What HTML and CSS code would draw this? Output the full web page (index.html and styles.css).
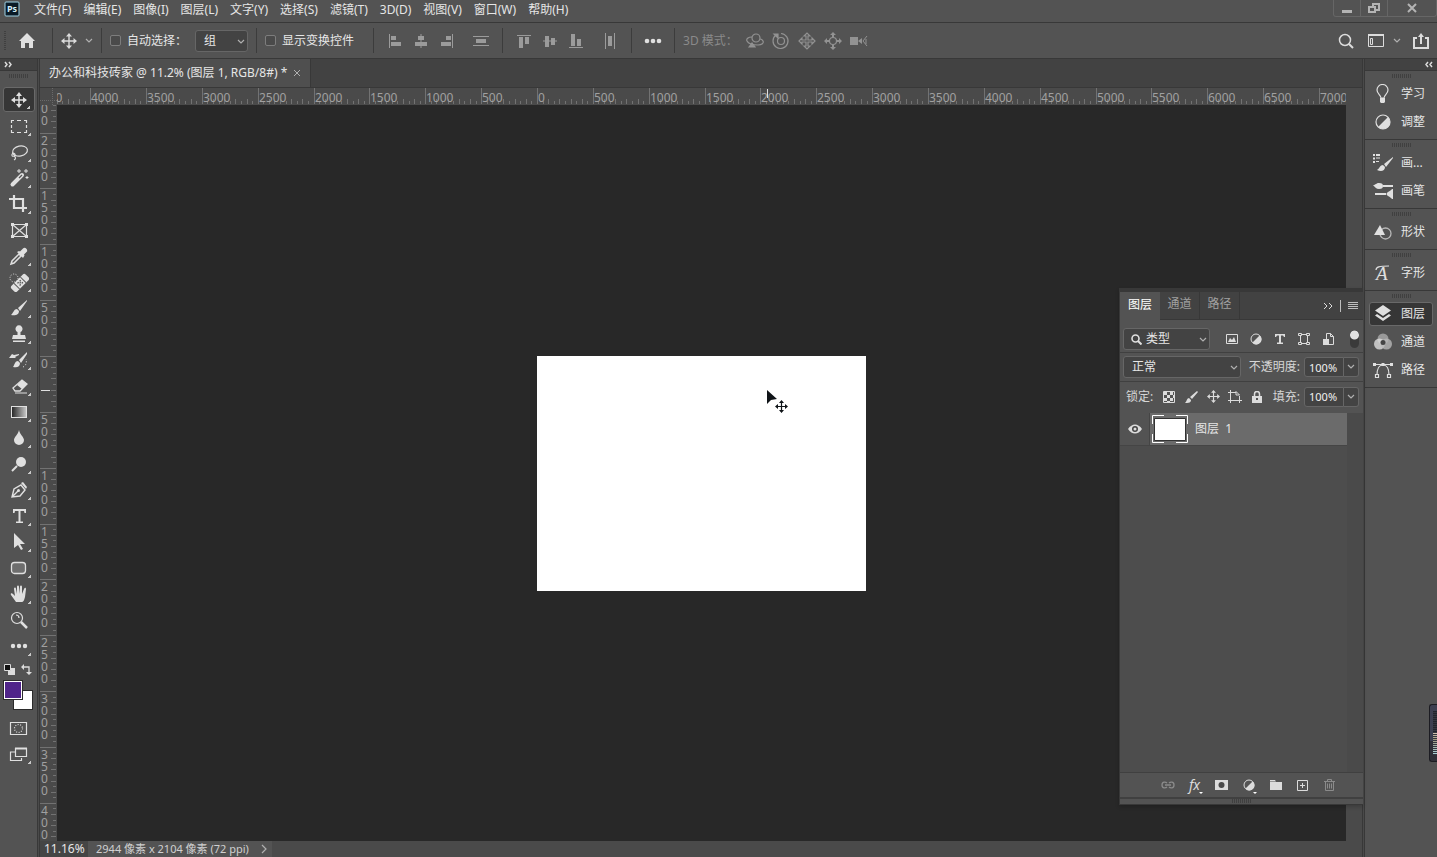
FILE: index.html
```
<!DOCTYPE html>
<html lang="zh-CN">
<head>
    <meta charset="utf-8">
    <title>办公和科技砖家</title>
    <link rel="stylesheet" href="styles.css">
</head>
<body>
    <header class="menubar">
        <svg class="logo" width="16" height="16" viewBox="0 0 16 16">
            <rect x="1" y="1" width="14" height="14" rx="1" fill="#0a1a26" stroke="#9fd3e6"/>
            <text x="3" y="11" class="logo-text">Ps</text>
        </svg>
        <nav class="menus">
            <button>文件(F)</button>
            <button>编辑(E)</button>
            <button>图像(I)</button>
            <button>图层(L)</button>
            <button>文字(Y)</button>
            <button>选择(S)</button>
            <button>滤镜(T)</button>
            <button>3D(D)</button>
            <button>视图(V)</button>
            <button>窗口(W)</button>
            <button>帮助(H)</button>
        </nav>
        <div class="window-controls">
            <button aria-label="最小化"><svg width="12" height="12"><path d="M1 8h10v3H1z" fill="#b4b4b4"/></svg></button>
            <button aria-label="还原"><svg width="12" height="12" fill="none" stroke="#b4b4b4" stroke-width="2"><path d="M5 4V2h6v6H8M1 5h6v5H1z"/></svg></button>
            <button class="close" aria-label="关闭"><svg width="12" height="12" stroke="#b4b4b4" stroke-width="2"><path d="M2 2l8 8M10 2l-8 8"/></svg></button>
        </div>
    </header>

    <div class="options">
        <span class="grip-v"></span>
        <button class="home" aria-label="主页"><svg width="18" height="16" fill="#e0e0e0"><path d="M9 0L17 8H15V15H11V10H7V15H3V8H1z"/></svg></button>
        <span class="sep"></span>
        <button class="opt-move" aria-label="移动工具">
            <svg width="16" height="16" viewBox="0 0 16 16"><path d="M8 2v12M2 8h12" stroke="#dcdcdc" stroke-width="1.4"/><path d="M8 0l3 3.5H5zM8 16l3-3.5H5zM0 8l3.5-3v6zM16 8l-3.5-3v6z" fill="#dcdcdc"/></svg>
        </button>
        <button class="opt-chevron" aria-label="预设"><svg width="8" height="6" class="chev"><path d="M1 1l3 3 3-3"/></svg></button>
        <span class="sep"></span>
        <label class="check"><input type="checkbox">自动选择：</label>
        <span class="select group-select">
            <select aria-label="组"><option>组</option></select>
            <svg width="8" height="6" class="chev"><path d="M1 1l3 3 3-3"/></svg>
        </span>
        <span class="sep"></span>
        <label class="check transform"><input type="checkbox">显示变换控件</label>
        <span class="sep"></span>
        <button class="opt" aria-label="左对齐"><svg width="16" height="16" fill="#9b9b9b"><path d="M2 1h1v14H2zM4 3h5v4H4zM4 9h10v4H4z"/></svg></button>
        <button class="opt" aria-label="水平居中对齐"><svg width="16" height="16" fill="#9b9b9b"><path d="M7.5 1h1v14h-1zM5 3h6v4H5zM2 9h12v4H2z"/></svg></button>
        <button class="opt" aria-label="右对齐"><svg width="16" height="16" fill="#9b9b9b"><path d="M13 1h1v14h-1zM7 3h5v4H7zM2 9h10v4H2z"/></svg></button>
        <button class="opt spaced" aria-label="垂直分布"><svg width="16" height="16" fill="#9b9b9b"><path d="M0 3h16v1H0zM3 6h10v4H3zM0 12h16v1H0z"/></svg></button>
        <span class="sep"></span>
        <button class="opt" aria-label="顶对齐"><svg width="16" height="16" fill="#9b9b9b"><path d="M1 2h14v1H1zM3 4h4v11H3zM9 4h4v7H9z"/></svg></button>
        <button class="opt" aria-label="垂直居中对齐"><svg width="16" height="16" fill="#9b9b9b"><path d="M1 7.5h14v1H1zM3 3h4v11H3zM9 5h4v7H9z"/></svg></button>
        <button class="opt" aria-label="底对齐"><svg width="16" height="16" fill="#9b9b9b"><path d="M1 14h14v1H1zM3 1h4v12H3zM9 6h4v7H9z"/></svg></button>
        <button class="opt spaced" aria-label="水平分布"><svg width="16" height="16" fill="#9b9b9b"><path d="M3 0h1v16H3zM6 3h4v10H6zM12 0h1v16h-1z"/></svg></button>
        <span class="sep"></span>
        <button class="opt" aria-label="更多"><svg width="18" height="6" fill="#e0e0e0"><circle cx="3" cy="3" r="2.3"/><circle cx="9" cy="3" r="2.3"/><circle cx="15" cy="3" r="2.3"/></svg></button>
        <span class="sep"></span>
        <span class="mode-label">3D 模式：</span>
        <button class="opt" aria-label="环绕"><svg width="20" height="16" viewBox="0 0 20 16" fill="none" stroke="#929292" stroke-width="1.2"><circle cx="11" cy="5" r="4"/><path d="M7 4C3 4 1 6 2 8s5 4 11 4c4 0 6-2 5-4s-2-2-3-2"/><path d="M4 14l3-4 3 4z" fill="#929292"/></svg></button>
        <button class="opt" aria-label="滚动"><svg width="18" height="18" fill="none" stroke="#929292" stroke-width="1.2"><circle cx="9" cy="9" r="3.5"/><path d="M4 3a7.500 7.500 0 1 0 5-1.500"/><path d="M2 2h4v4z" fill="#929292"/></svg></button>
        <button class="opt" aria-label="拖动"><svg width="18" height="18" viewBox="0 0 18 18" fill="none" stroke="#929292" stroke-width="1.2"><path d="M8 8V4H6l3-3 3 3h-2v4h4V6l3 3-3 3v-2h-4v4h2l-3 3-3-3h2v-4H4v2L1 9l3-3v2z"/></svg></button>
        <button class="opt" aria-label="滑动"><svg width="18" height="18" viewBox="0 0 18 18" fill="#929292"><circle cx="9" cy="9" r="3.5" fill="none" stroke="#929292" stroke-width="1.2"/><path d="M9 0l3 3h-2v2H8V3H6zM9 18l3-3h-2v-2H8v2H6zM0 9l3-3v2h2v2H3v2zM18 9l-3-3v2h-2v2h2v2z"/></svg></button>
        <button class="opt" aria-label="缩放"><svg width="20" height="12" fill="#929292"><path d="M1 2h8v8H1zM9 6l4-3v6z"/><path d="M18 1l-4 5 4 5M17 4v5" fill="none" stroke="#929292"/></svg></button>
        <div class="options-right">
            <button aria-label="搜索"><svg width="16" height="16" fill="none" stroke="#dcdcdc" stroke-width="1.5"><circle cx="7" cy="7" r="5.5"/><path d="M11 11l4 4" stroke-width="2"/></svg></button>
            <button class="workspace-btn" aria-label="工作区"><svg width="16" height="14" fill="none" stroke="#dcdcdc"><path d="M.5 1.5h15v11H.5z"/><path d="M0 1h16" stroke-width="2"/><path d="M2.5 4.5h2v6h-2z"/></svg></button>
            <button class="workspace-chev" aria-label="选择工作区"><svg width="8" height="6" class="chev"><path d="M1 1l3 3 3-3"/></svg></button>
            <button aria-label="共享"><svg width="16" height="16" fill="none" stroke="#dcdcdc" stroke-width="2"><path d="M4 5H1v10h14V5h-3M8 11V3"/><path d="M8 0l3 4H5z" fill="#dcdcdc" stroke="none"/></svg></button>
        </div>
    </div>

    <main class="workspace">
        <aside class="toolbar">
            <button class="expand" aria-label="展开"><svg width="8" height="7" class="dbl"><path d="M1 1l2 2.5L1 6M5 1l2 2.5L5 6"/></svg></button>
            <span class="grip"></span>
            <div class="tools">
                <button class="tool active" aria-label="移动"><svg viewBox="0 0 20 20"><path d="M10 4v12M4 10h12" stroke="#e0e0e0" stroke-width="1.5"/><path d="M10 2l3 4H7zM10 18l3-4H7zM2 10l4-3v6zM18 10l-4-3v6z"/></svg></button>
                <button class="tool" aria-label="矩形选框"><svg viewBox="0 0 20 20" class="line"><path d="M2.5 7V4.5H5M8 4.5h4M15 4.5h2.500V7M17.5 9v3M17.5 14v2.500H15M12 16.5H8M5 16.5H2.5V14M2.5 12V9"/></svg></button>
                <button class="tool" aria-label="套索"><svg viewBox="0 0 20 20" class="line"><ellipse cx="11" cy="9" rx="7.5" ry="5" transform="rotate(-12 11 9)"/><path d="M4 11c-2 2-1 4 1 3s1-3-1-3M5 14c2 1 2 3 0 4"/></svg></button>
                <button class="tool" aria-label="魔棒"><svg viewBox="0 0 20 20"><path d="M3.5 16.5L13 7" stroke="#e0e0e0" stroke-width="4" stroke-linecap="round"/><path d="M10 10l3-3" stroke="#535353" stroke-width="1.3"/><path d="M10 1v4M8 3h4M17 1v4M15 3h4M18 8v3M16.500 9.500h3" stroke="#e0e0e0"/></svg></button>
                <button class="tool" aria-label="裁剪"><svg viewBox="0 0 20 20" class="line thick"><path d="M0 5h14v13M5 1v13h13"/></svg></button>
                <button class="tool plain" aria-label="图框"><svg viewBox="0 0 20 20" class="line"><path d="M3.5 4.5h14v12h-14zM3.5 4.5l14 12M17.5 4.5l-14 12"/><path d="M2 3h3v3H2zM16 3h3v3h-3zM2 15h3v3H2zM16 15h3v3h-3z" class="fill"/></svg></button>
                <button class="tool" aria-label="吸管"><svg viewBox="0 0 20 20"><path d="M10 8l2 2-7 7-3 1 1-3z" fill="none" stroke="#e0e0e0" stroke-width="1.5"/><path d="M8 6l2-1 1 .5 3-3c2-2 5 1 4 3l-3 3 .5 1L14 12z"/></svg></button>
                <button class="tool" aria-label="污点修复画笔"><svg viewBox="0 0 20 20"><g transform="rotate(-45 11 11)"><rect x="1" y="7" width="20" height="8" rx="2"/><rect x="6" y="7" width="1" height="8" fill="#535353"/><rect x="15" y="7" width="1" height="8" fill="#535353"/><path d="M9 9.500h1.500M12 9.500h1.500M9 12.500h1.500M12 12.500h1.500M10.500 11h1.500" stroke="#535353" stroke-width="1.3"/></g><circle cx="5" cy="6" r="4" fill="none" stroke="#e0e0e0" stroke-dasharray="1 1.500"/></svg></button>
                <button class="tool" aria-label="画笔"><svg viewBox="0 0 20 20"><path d="M18 2L9 10l2 3 7-10zM8 11c-3 0-3 3-6 6 4 1 8 0 8-4z"/></svg></button>
                <button class="tool" aria-label="仿制图章"><svg viewBox="0 0 20 20"><path d="M8.500 8a3.500 3.500 0 1 1 3 0v3h4.500l1 4H3l1-4h4.500zM4 16.500h12V18H4z"/></svg></button>
                <button class="tool" aria-label="历史记录画笔"><svg viewBox="0 0 20 20"><path d="M18 2l-8 8 2 3 6-9zM9 11c-3 0-3 3-5 6 4 1 7 0 7-4zM0 8l3-4 2 1 5-1v1L6 7l1 1z"/><path d="M14 17c3-1 4-5 3-8" fill="none" stroke="#e0e0e0" stroke-dasharray="1 2"/></svg></button>
                <button class="tool" aria-label="橡皮擦"><svg viewBox="0 0 20 20"><path d="M4 12l9-8 5 4-7 7H6z" fill="none" stroke="#e0e0e0" stroke-width="1.3"/><path d="M8 9l5-5 5 4-5 5zM6 16.500h12v1H6z"/></svg></button>
                <button class="tool" aria-label="渐变"><svg viewBox="0 0 20 20"><defs><linearGradient id="ramp"><stop offset="0" stop-color="#222"/><stop offset="1" stop-color="#ccc"/></linearGradient></defs><rect x="2.500" y="4.500" width="15" height="11" fill="url(#ramp)" stroke="#e0e0e0"/></svg></button>
                <button class="tool" aria-label="模糊"><svg viewBox="0 0 20 20"><path d="M10 2c1 5 5 7 5 10a5 5 0 0 1-10 0c0-3 4-5 5-10z"/></svg></button>
                <button class="tool" aria-label="减淡"><svg viewBox="0 0 20 20"><circle cx="12" cy="8" r="5"/><path d="M8 12l-5 5" stroke="#e0e0e0" stroke-width="2"/></svg></button>
                <button class="tool" aria-label="钢笔"><svg viewBox="0 0 20 20"><path d="M3 17L5 9l7-4 4 5-5 6zM3 17l6-6" fill="none" stroke="#e0e0e0" stroke-width="1.4"/><circle cx="9.500" cy="10.500" r="1.500"/><path d="M12 3l2-1 4 5-1 2z"/></svg></button>
                <button class="tool" aria-label="文字"><svg viewBox="0 0 20 20"><path d="M4 3h13v4h-1.500L15 5h-3.500v10.500H14V17H7v-1.500h2.500V5H6l-.5 2H4z"/></svg></button>
                <button class="tool" aria-label="路径选择"><svg viewBox="0 0 20 20"><path d="M5 1l11 11h-5l3 5-2 1-3-5-4 3z"/></svg></button>
                <button class="tool" aria-label="圆角矩形"><svg viewBox="0 0 20 20"><rect x="2.500" y="4.500" width="14" height="11" rx="3" fill="#6e6e6e" stroke="#e0e0e0" stroke-width="1.300"/></svg></button>
                <button class="tool" aria-label="抓手"><svg viewBox="0 0 20 20"><path d="M7 18L2 11c-1-2 1-2 2-1l2 2L5 5c0-2 2-2 2 0l1 5V3c0-2 2-2 2 0v7l1-7c0-2 2-2 2 0v7l2-5c1-2 2-1 2 0l-1 8c-1 4-2 5-3 5z"/></svg></button>
                <button class="tool plain" aria-label="缩放"><svg viewBox="0 0 20 20" class="line"><circle cx="8" cy="8" r="5.500"/><path d="M7 5c2 0 3 1 3 3"/><path d="M12 12l6 6" stroke-width="2.500"/></svg></button>
                <button class="tool" aria-label="编辑工具栏"><svg viewBox="0 0 20 20"><circle cx="4" cy="10" r="2.200"/><circle cx="10" cy="10" r="2.200"/><circle cx="16" cy="10" r="2.200"/></svg></button>
            </div>
            <div class="color-mini">
                <button aria-label="默认颜色"><svg width="11" height="11"><path d="M4 4h7v7H4z" fill="#dcdcdc"/><path d="M.5 .5h6v6h-6z" fill="#111" stroke="#dcdcdc"/></svg></button>
                <button aria-label="切换颜色"><svg width="11" height="11"><path d="M3 3h5v6" fill="none" stroke="#dcdcdc" stroke-width="1.300"/><path d="M0 3l3-3v6zM8 11L5 8h6z" fill="#dcdcdc"/></svg></button>
            </div>
            <div class="swatches">
                <button class="swatch back" aria-label="背景色"></button>
                <button class="swatch front" aria-label="前景色"></button>
            </div>
            <button class="tool plain" aria-label="快速蒙版"><svg viewBox="0 0 20 20" class="line"><path d="M1.500 4.500h16v12h-16z"/><circle cx="9.500" cy="10.500" r="4" stroke-dasharray="1 1.500"/></svg></button>
            <button class="tool" aria-label="屏幕模式"><svg viewBox="0 0 20 20" class="line"><path d="M6 8H1.500v8.500h11V14M6.500 4.500h11v8h-11z"/><path d="M6 4.500h12" stroke-width="2"/></svg></button>
        </aside>

        <section class="document">
            <div class="doc-tabs">
                <div class="doc-tab">
                    <span>办公和科技砖家 @ 11.2% (图层 1, RGB/8#) *</span>
                    <button aria-label="关闭"><svg width="8" height="8" stroke="#b0b0b0"><path d="M1 1l6 6M7 1L1 7"/></svg></button>
                </div>
            </div>
            <div class="view">
                <div class="ruler-corner"></div>
                <svg class="ruler ruler-x" id="rulerX"></svg>
                <div class="scroll-y"></div>
                <svg class="ruler ruler-y" id="rulerY"></svg>
                <div class="canvas" id="canvas">
                    <div class="artboard" id="artboard"></div>
                    <svg class="cursor" width="22" height="26" viewBox="0 0 22 26"><path d="M1 1v14l4-4 6-1z" fill="#101418"/><path d="M15.500 12v11M10 17.500h11" stroke="#101418" stroke-width="1.200"/><path d="M15.500 11l2.500 3h-5zM15.500 24l2.500-3h-5zM9 17.500l3-2.500v5zM22 17.500l-3-2.500v5z" fill="#101418"/></svg>
                </div>
            </div>
            <footer class="status">
                <input class="zoom" value="11.16%" aria-label="缩放比例">
                <button class="doc-info">2944 像素 x 2104 像素 (72 ppi)<svg width="6" height="10" class="chev"><path d="M1 1l4 4-4 4"/></svg></button>
            </footer>
        </section>

        <aside class="dock">
            <button class="expand right" aria-label="展开面板"><svg width="8" height="7" class="dbl"><path d="M3 1L1 3.500 3 6M7 1L5 3.500 7 6"/></svg></button>
            <div class="dock-group">
                <span class="grip"></span>
                <button><svg viewBox="0 0 20 20" class="line"><path d="M8 14c0-3-4-4-4-8a5.500 5.500 0 0 1 11 0c0 4-4 5-4 8z"/><path d="M7 14h5v4l-1 1H8l-1-1z" class="fill"/></svg>学习</button>
                <button><svg viewBox="0 0 20 20"><circle cx="10" cy="10" r="7" fill="none" stroke="#e0e0e0" stroke-width="1.200"/><path d="M15 5A7 7 0 1 1 5 15z"/></svg>调整</button>
            </div>
            <div class="dock-group">
                <span class="grip"></span>
                <button><svg viewBox="0 0 20 20"><path d="M0 1h2v2H0zM0 4.500h2v2H0zM0 8h2v2H0zM3 1h4v2H3zM3 4.500h4v1H3zM3 8h3v1H3zM20 4l-9 7 2 3 7-9zM10 12c-3 0-3 3-6 5 4 2 8 1 8-3z"/></svg>画...</button>
                <button><svg viewBox="0 0 20 20"><path d="M0 4c3 0 3-2 6-2s4 1 4 3-1 3-4 3-4-2-6-4zM10 4h10v2H10zM2 12h11v2H2zM20 8v10c-2 0-2-2-5-3-2-1-2-3 0-4 3-1 3-3 5-3z"/></svg>画笔</button>
            </div>
            <div class="dock-group">
                <span class="grip"></span>
                <button><svg viewBox="0 0 20 20"><circle cx="12.500" cy="11.500" r="5.500" fill="none" stroke="#b8b8b8" stroke-width="1.300"/><path d="M7 3l5 10H1z"/></svg>形状</button>
            </div>
            <div class="dock-group">
                <span class="grip"></span>
                <button><svg viewBox="0 0 20 20"><text x="3" y="17" class="glyph-a">A</text><path d="M3 7c0-3 3-4 13-4" fill="none" stroke="#e0e0e0" stroke-width="1.200"/></svg>字形</button>
            </div>
            <div class="dock-group">
                <span class="grip"></span>
                <button class="active"><svg viewBox="0 0 20 20"><path d="M10 1l8 5.500-8 5.500-8-5.500zM4 10l6 4 6-4 2 1.500-8 5.500-8-5.500z"/></svg>图层</button>
                <button><svg viewBox="0 0 20 20"><circle cx="10" cy="7" r="5.500" fill="#999"/><circle cx="6.500" cy="12" r="5.500" fill="#ddd" fill-opacity=".8"/><circle cx="13.500" cy="12" r="5.500" fill="#b8b8b8" fill-opacity=".8"/><circle cx="10" cy="10.500" r="2.500" fill="#444"/></svg>通道</button>
                <button><svg viewBox="0 0 20 20" class="line"><path d="M2 4.500h16M4 15c0-6 2-10 6-10s6 4 6 10"/><path d="M0 3h3v3H0zM17 3h3v3h-3zM8.500 3h3v3h-3z" class="fill"/><path d="M2.500 14.500h3v3h-3zM14.500 14.500h3v3h-3z"/></svg>路径</button>
            </div>
        </aside>

        <section class="layers">
            <div class="panel-tabs">
                <button class="active">图层</button>
                <button>通道</button>
                <button>路径</button>
                <span class="panel-menu">
                    <svg width="10" height="8" class="dbl thin"><path d="M1 1l3 3-3 3M6 1l3 3-3 3"/></svg>
                    <i></i>
                    <svg width="10" height="9" stroke="#bdbdbd"><path d="M0 1.500h10M0 3.500h10M0 5.500h10M0 7.500h10"/></svg>
                </span>
            </div>
            <div class="row filter">
                <span class="select type-select">
                    <svg class="lens" width="11" height="11" fill="none" stroke="#e0e0e0" stroke-width="1.600"><circle cx="4.500" cy="4.500" r="3.500"/><path d="M7 7l3.500 3.500" stroke-width="2"/></svg>
                    <select aria-label="过滤类型"><option>类型</option></select>
                    <svg width="8" height="6" class="chev"><path d="M1 1l3 3 3-3"/></svg>
                </span>
                <div class="filter-icons">
                    <button aria-label="像素图层"><svg width="12" height="11"><path d="M.5 .5h11v9H.5z" fill="none" stroke="#dcdcdc"/><path d="M2 8l2-4 2 2 2-3 2 5z" fill="#dcdcdc"/></svg></button>
                    <button aria-label="调整图层"><svg width="12" height="12"><circle cx="6" cy="6" r="5" fill="none" stroke="#dcdcdc"/><path d="M9.500 2.500a5 5 0 1 1-7 7z" fill="#dcdcdc"/></svg></button>
                    <button aria-label="文字图层"><svg width="10" height="10" fill="#dcdcdc"><path d="M0 0h10v3H9L8 1.500H6V8.500h2V10H2V8.500h2V1.500H2L1 3H0z"/></svg></button>
                    <button aria-label="形状图层"><svg width="12" height="12" fill="none" stroke="#dcdcdc"><path d="M2.500 1.500h7v9h-7z"/><path d="M.5 .5h3v2h-3zM8.500 .5h3v2h-3zM.5 9.500h3v2h-3zM8.500 9.500h3v2h-3z" fill="#535353"/></svg></button>
                    <button aria-label="智能对象"><svg width="11" height="12" fill="none" stroke="#dcdcdc"><path d="M3.500 6V.5h4l3 3v8H6M7.500 .5v3h3"/><path d="M0 6h6v6H0z" fill="#dcdcdc" stroke="none"/></svg></button>
                </div>
                <button class="toggle" aria-label="打开过滤"></button>
            </div>
            <div class="row blend">
                <span class="select blend-select">
                    <select aria-label="混合模式"><option>正常</option></select>
                    <svg width="8" height="6" class="chev"><path d="M1 1l3 3 3-3"/></svg>
                </span>
                <label class="amount">不透明度: <input value="100%"></label>
                <button class="amount-chev" aria-label="不透明度滑块"><svg width="8" height="6" class="chev"><path d="M1 1l3 3 3-3"/></svg></button>
            </div>
            <div class="row lock">
                <span>锁定:</span>
                <div class="lock-icons">
                    <button aria-label="锁定透明像素"><svg width="12" height="12"><path d="M.5 .5h11v11H.5z" fill="none" stroke="#dcdcdc"/><path d="M1 1h3v3H1zM7 1h3v3H7zM4 4h3v3H4zM10 4h1v3h-1zM1 7h3v3H1zM7 7h3v3H7zM4 10h3v1H4z" fill="#dcdcdc"/></svg></button>
                    <button aria-label="锁定图像像素"><svg width="14" height="14" fill="#dcdcdc"><path d="M13 1L6 7l2 2 6-7zM5 8c-2 0-2 3-4 5 3 0 6 0 6-3z"/></svg></button>
                    <button aria-label="锁定位置"><svg width="13" height="13" viewBox="0 0 16 16"><path d="M8 2v12M2 8h12" stroke="#dcdcdc" stroke-width="1.400"/><path d="M8 0l3 3.500H5zM8 16l3-3.500H5zM0 8l3.500-3v6zM16 8l-3.500-3v6z" fill="#dcdcdc"/></svg></button>
                    <button aria-label="锁定画板"><svg width="14" height="13" fill="none" stroke="#dcdcdc"><path d="M2.500 0v13M0 2.500h8M0 10.500h14M11.500 6v7M8 1.500l3.500 3.500H8z"/></svg></button>
                    <button aria-label="全部锁定"><svg width="10" height="12" fill="#dcdcdc"><path d="M2.500 5V3a2.500 2.500 0 0 1 5 0v2" fill="none" stroke="#dcdcdc" stroke-width="1.500"/><path d="M0 5h10v7H0z"/><path d="M4 7h2v2H4z" fill="#535353"/></svg></button>
                </div>
                <label class="amount">填充: <input value="100%"></label>
                <button class="amount-chev" aria-label="填充滑块"><svg width="8" height="6" class="chev"><path d="M1 1l3 3 3-3"/></svg></button>
            </div>
            <div class="layer-list">
                <div class="layer">
                    <button class="eye" aria-label="可见性"><svg width="14" height="10"><path d="M0 5c4-6 10-6 14 0-4 6-10 6-14 0z" fill="#dcdcdc"/><circle cx="7" cy="5" r="3" fill="#444"/><circle cx="7" cy="5" r="1.500" fill="#dcdcdc"/></svg></button>
                    <div class="layer-body">
                        <svg class="thumb" width="36" height="28"><path d="M2.500 3.500h31v22h-31z" fill="#fff" stroke="#333"/><path d="M.5 9V.5H12M24 .5h11.500V9M35.500 19v8.500H24M12 27.500H.5V19" fill="none" stroke="#fff"/></svg>
                        <span>图层&nbsp; 1</span>
                    </div>
                </div>
            </div>
            <div class="panel-footer">
                <button aria-label="链接图层"><svg width="14" height="8" fill="none" stroke="#8b8b8b" stroke-width="1.300"><path d="M6 2C5 1 1 0 1 4s4 3 5 2M8 2c1-1 5-2 5 2S9 7 8 6M4 4h6"/></svg></button>
                <button class="fx drop" aria-label="图层样式">fx</button>
                <button aria-label="添加蒙版"><svg width="13" height="10"><path d="M0 0h13v10H0z" fill="#dcdcdc"/><circle cx="6.500" cy="5" r="3" fill="#4a4a4a"/></svg></button>
                <button class="drop" aria-label="调整图层"><svg width="12" height="12"><circle cx="6" cy="6" r="5" fill="none" stroke="#dcdcdc"/><path d="M9.500 2.500a5 5 0 1 1-7 7z" fill="#dcdcdc"/></svg></button>
                <button aria-label="新建组"><svg width="12" height="10" fill="#dcdcdc"><path d="M0 0h5l1 1.500H0zM0 2h12v8H0z"/></svg></button>
                <button aria-label="新建图层"><svg width="11" height="11" fill="none" stroke="#dcdcdc"><path d="M.5 .5h10v10H.5zM5.500 3v5M3 5.500h5"/></svg></button>
                <button aria-label="删除图层"><svg width="11" height="12" fill="none" stroke="#8b8b8b"><path d="M0 2.500h11M3.500 2V.5h4V2M1.500 3v8.500h8V3M3.500 4.500v5M5.500 4.500v5M7.500 4.500v5"/></svg></button>
            </div>
            <div class="panel-grip"><span class="grip"></span></div>
        </section>

        <div class="edge-widget"><i></i></div>
    </main>

    <script src="rulers.js"></script>
</body>
</html>
```
FILE: styles.css
```
* {
    box-sizing: border-box;
}
body {
    margin: 0;
    height: 100vh;
    display: flex;
    flex-direction: column;
    overflow: hidden;
    background: #535353;
    color: #e6e6e6;
    font-family: "Noto Sans", "Noto Sans CJK SC", sans-serif;
    font-size: 12px;
    line-height: 16px;
}
button, input, select {
    font: inherit;
    color: inherit;
    margin: 0;
    padding: 0;
    border: none;
    border-radius: 0;
    background: none;
}
button {
    display: flex;
    align-items: center;
    justify-content: center;
    flex-shrink: 0;
    white-space: nowrap;
}
svg {
    display: block;
    flex-shrink: 0;
}
.chev {
    fill: none;
    stroke: #b0b0b0;
    stroke-width: 1.2;
}
.dbl {
    fill: none;
    stroke: #dcdcdc;
    stroke-width: 1.5;
}
.dbl.thin {
    stroke-width: 1;
}
.grip {
    display: block;
    width: 19px;
    height: 4px;
    background: repeating-linear-gradient(to right, #404040 0 1px, transparent 1px 2px);
}

/* menu bar */
.menubar {
    display: flex;
    align-items: flex-start;
    height: 23px;
    padding-left: 4px;
    border-bottom: 1px solid #383838;
}
.logo {
    margin-top: 1px;
}
.logo-text {
    font-size: 9px;
    font-weight: bold;
    fill: #d5eef7;
}
.menus {
    display: flex;
    gap: 12px;
    margin-left: 14px;
    padding-top: 2px;
}
.window-controls {
    display: flex;
    margin-left: auto;
    border: 1px solid #666;
    border-top: none;
    border-radius: 0 0 3px 3px;
}
.window-controls button {
    width: 27px;
    height: 16px;
    border-right: 1px solid #666;
}
.window-controls .close {
    width: 48px;
    border-right: none;
}

/* options bar */
.options {
    display: flex;
    align-items: center;
    height: 36px;
    padding-left: 4px;
    border-bottom: 1px solid #383838;
    white-space: nowrap;
}
.grip-v {
    width: 2px;
    height: 20px;
    margin-right: 4px;
    background: repeating-linear-gradient(to bottom, #404040 0 1px, transparent 1px 2px);
}
.home {
    width: 34px;
}
.sep {
    flex-shrink: 0;
    width: 1px;
    height: 25px;
    margin: 0 8px;
    background: #3c3c3c;
}
.opt-move {
    width: 16px;
}
.opt-chevron {
    width: 8px;
    margin-left: 8px;
}
.opt {
    width: 26px;
    height: 24px;
}
.opt.spaced {
    margin-left: 8px;
}
.check {
    display: flex;
    align-items: center;
    gap: 6px;
}
.check.transform {
    margin-right: 11px;
}
.check input {
    appearance: none;
    width: 11px;
    height: 11px;
    border: 1px solid #7d7d7d;
    border-radius: 2px;
    background: #4a4a4a;
}
.select {
    position: relative;
    display: block;
    flex-shrink: 0;
}
.select select {
    appearance: none;
    display: block;
    width: 100%;
    height: 22px;
    padding-left: 8px;
    border: 1px solid #666;
    border-radius: 3px;
    background: #434343;
}
.select .chev {
    position: absolute;
    right: 3px;
    top: 9px;
}
.select .lens {
    position: absolute;
    left: 8px;
    top: 6px;
}
.group-select {
    width: 53px;
    margin-left: 8px;
}
.type-select {
    width: 87px;
}
.type-select select {
    padding-left: 22px;
}
.blend-select {
    width: 118px;
}
.mode-label {
    width: 59px;
    color: #8a8a8a;
}
.options-right {
    display: flex;
    align-items: center;
    margin-left: auto;
    padding-right: 8px;
}
.workspace-btn {
    margin-left: 14px;
}
.workspace-chev {
    margin: 0 12px 0 9px;
}

/* workspace */
.workspace {
    position: relative;
    display: flex;
    gap: 1px;
    flex: 1;
    min-height: 0;
    background: #4a4a4a;
}
.toolbar {
    display: flex;
    flex-direction: column;
    width: 38px;
    border-right: 1px solid #383838;
    background: #535353;
}
.expand {
    height: 12px;
    padding: 0 4px;
    justify-content: flex-start;
    border-bottom: 1px solid #383838;
    background: #424242;
}
.expand.right {
    justify-content: flex-end;
}
.toolbar > .grip {
    margin: 3px 9px 9px;
}
.tool {
    position: relative;
    width: 32px;
    height: 25px;
    margin: 0 0 1px 3px;
}
.tool svg {
    width: 20px;
    height: 20px;
    fill: #e0e0e0;
}
.tool::after {
    content: "";
    position: absolute;
    right: 4px;
    bottom: 2px;
    width: 3px;
    height: 3px;
    background: linear-gradient(135deg, transparent 40%, #c8c8c8 40%);
}
.tool.plain::after {
    display: none;
}
.tool.active {
    border: 1px solid #696969;
    border-radius: 3px;
    background: #363636;
}
svg.line {
    fill: none;
    stroke: #e0e0e0;
    stroke-width: 1.2;
}
svg.thick {
    stroke-width: 2.2;
}
.tool svg.line {
    fill: none;
}
.fill {
    fill: #e0e0e0;
    stroke: none;
}
.color-mini {
    display: flex;
    gap: 6px;
    margin: 5px 0 5px 4px;
}
.swatches {
    display: grid;
    padding: 0 0 5px 3px;
}
.swatch {
    grid-area: 1 / 1;
    width: 20px;
    height: 20px;
    border: 1px solid #2b2b2b;
}
.swatch.back {
    margin: 10px 0 0 10px;
    background: #fff;
}
.swatch.front {
    background: #50248a;
    box-shadow: inset 0 0 0 1px #fff;
}

/* document window */
.document {
    display: flex;
    flex-direction: column;
    flex: 1;
    min-width: 0;
    border: 1px solid #383838;
    border-width: 0 1px;
}
.doc-tabs {
    display: flex;
    height: 29px;
    border-bottom: 1px solid #383838;
    background: #424242;
}
.doc-tab {
    display: flex;
    align-items: center;
    gap: 6px;
    padding: 0 9px;
    border-right: 1px solid #383838;
    background: #4f4f4f;
    white-space: nowrap;
}
.view {
    display: grid;
    grid-template-columns: 17px 1fr 16px;
    grid-template-rows: 17px 1fr;
    flex: 1;
    min-height: 0;
}
.ruler-corner {
    background:
        repeating-linear-gradient(to right, #6a6a6a 0 1px, transparent 1px 2px) 0 12px / 100% 1px no-repeat,
        repeating-linear-gradient(to bottom, #6a6a6a 0 1px, transparent 1px 2px) 12px 0 / 1px 100% no-repeat,
        #4a4a4a;
}
.ruler {
    width: 100%;
    height: 100%;
    min-height: 0;
    overflow: hidden;
    background: #4a4a4a;
}
.ruler text {
    fill: #a0a0a0;
    font-size: 12px;
}
.ruler path {
    stroke: #727272;
    fill: none;
    shape-rendering: crispEdges;
}
.ruler .pointer {
    stroke: #e0e0e0;
}
.scroll-y {
    grid-area: 1 / 3 / 3 / 4;
    background: #4a4a4a;
}
.canvas {
    position: relative;
    display: flex;
    align-items: center;
    justify-content: center;
    min-height: 0;
    background: #282828;
}
.artboard {
    width: 329px;
    height: 235px;
    background: #fff;
}
.cursor {
    position: absolute;
    left: 709px;
    top: 284px;
}
.status {
    display: flex;
    height: 16px;
}
.zoom {
    width: 48px;
    padding-left: 4px;
    background: #454545;
}
.doc-info {
    gap: 12px;
    padding: 0 5px 0 8px;
    font-size: 11px;
    color: #d0d0d0;
    background: #535353;
}

/* collapsed panel dock */
.dock {
    display: flex;
    flex-direction: column;
    width: 73px;
    border-left: 1px solid #383838;
    background: #535353;
}
.dock-group {
    padding: 3px 4px;
    border-bottom: 1px solid #383838;
}
.dock-group .grip {
    margin: 0 0 4px 23px;
}
.dock-group button {
    width: 100%;
    height: 24px;
    margin-bottom: 4px;
    justify-content: flex-start;
    gap: 8px;
    padding-left: 3px;
    border: 1px solid transparent;
    border-radius: 3px;
}
.dock-group button:last-child {
    margin-bottom: 2px;
}
.dock-group button.active {
    border-color: #696969;
    background: #363636;
}
.dock-group svg {
    width: 20px;
    height: 20px;
    fill: #e0e0e0;
}
.dock-group svg.line {
    fill: none;
}
.glyph-a {
    font: italic 19px "Liberation Serif", serif;
}

/* layers panel */
.layers {
    position: absolute;
    top: 229px;
    right: 74px;
    bottom: 52px;
    width: 244px;
    display: flex;
    flex-direction: column;
    border: 1px solid #383838;
    border-width: 4px 0 1px 1px;
    background: #535353;
    box-shadow: 0 2px 4px rgba(0,0,0,0.2);
}
.panel-tabs {
    display: flex;
    height: 28px;
    background: #424242;
}
.panel-tabs button {
    width: 40px;
    padding-bottom: 3px;
    color: #a0a0a0;
    border: 1px solid #383838;
    border-width: 0 1px 1px 0;
}
.panel-tabs .active {
    width: 40px;
    color: #fff;
    border: none;
    background: #535353;
}
.panel-menu {
    display: flex;
    align-items: center;
    justify-content: flex-end;
    gap: 7px;
    flex: 1;
    padding-right: 5px;
    border-bottom: 1px solid #383838;
}
.panel-menu i {
    width: 1px;
    height: 12px;
    background: #bdbdbd;
}
.row {
    display: flex;
    align-items: center;
    padding: 0 4px 0 3px;
    border-bottom: 1px solid #404040;
}
.filter {
    height: 33px;
    padding-top: 6px;
}
.filter-icons {
    display: flex;
    margin-left: 10px;
}
.filter-icons button {
    width: 24px;
}
.toggle {
    width: 9px;
    height: 18px;
    margin-left: auto;
    border-radius: 5px;
    background: radial-gradient(circle at 50% 5px, #e0e0e0 4px, #3a3a3a 5px);
}
.blend {
    height: 29px;
}
.lock {
    height: 31px;
    padding: 0 4px 2px 6px;
    border-bottom: none;
    color: #d6d6d6;
}
.lock-icons {
    display: flex;
    margin-left: 5px;
}
.lock-icons button {
    width: 22px;
}
.amount {
    display: flex;
    align-items: center;
    justify-content: flex-end;
    gap: 4px;
    flex: 1;
    color: #d6d6d6;
    white-space: nowrap;
}
.amount input {
    width: 40px;
    height: 20px;
    padding-left: 4px;
    border: 1px solid #666;
    border-radius: 3px 0 0 3px;
    background: #434343;
    color: #f0f0f0;
    font-size: 11px;
}
.amount-chev {
    width: 15px;
    height: 20px;
    border: 1px solid #666;
    border-left: none;
    border-radius: 0 3px 3px 0;
    background: #434343;
}
.layer-list {
    flex: 1;
    border-right: 16px solid #4a4a4a;
    background: #4d4d4d;
}
.layer {
    display: flex;
    height: 33px;
    border-bottom: 1px solid #454545;
}
.eye {
    width: 30px;
    border-right: 1px solid #454545;
    background: #535353;
}
.layer-body {
    display: flex;
    align-items: center;
    gap: 7px;
    flex: 1;
    padding-left: 2px;
    background: #6b6b6b;
}
.panel-footer {
    display: flex;
    justify-content: flex-end;
    height: 27px;
    padding-right: 20px;
    border: 1px solid #404040;
    border-width: 1px 0 2px;
}
.panel-footer button {
    position: relative;
    width: 27px;
}
.panel-footer .fx {
    font-size: 14px;
    font-style: italic;
    color: #dcdcdc;
}
.drop::after {
    content: "";
    position: absolute;
    right: 5px;
    bottom: 3px;
    border: 2px solid transparent;
    border-top-color: #fff;
    border-bottom: none;
}
.panel-grip {
    display: flex;
    justify-content: center;
    height: 5px;
}

/* floating strip on the screen edge */
.edge-widget {
    position: absolute;
    right: 0;
    top: 645px;
    width: 8px;
    height: 58px;
    padding: 6px 0 6px 3px;
    border: 1px solid #1c1c22;
    border-right: none;
    border-radius: 3px 0 0 3px;
    background: linear-gradient(#3d3f50 65%, #303038 65%);
}
.edge-widget i {
    display: block;
    height: 100%;
    background:
        repeating-linear-gradient(transparent 0 1px, #35363f 1px 2px),
        linear-gradient(#22242c 48%, #d8c8b8 48%, #a09a80 65%, #a8d4dc);
}
```
FILE: rulers.js
```
const PX_PER_500 = 55.86;
const canvas = document.getElementById('canvas');
const artboard = document.getElementById('artboard');
const pointer = { x: 710, y: 285 };

function drawRuler(svg, origin, length, vertical, pos) {
    let minor = '';
    let major = '';
    let labels = '';
    const first = -Math.ceil(origin / PX_PER_500);
    const last = Math.floor((length - origin) / PX_PER_500);

    for (let i = first; i <= last; i++) {
        const start = Math.round(origin + i * PX_PER_500);
        major += vertical ? `M0 ${start + 0.5}H16` : `M${start + 0.5} 0V16`;

        for (let j = 1; j < 10; j++) {
            const at = Math.round(origin + (i + j / 10) * PX_PER_500) + 0.5;
            const size = j % 2 ? 3 : 5;
            minor += vertical ? `M${16 - size} ${at}H16` : `M${at} ${16 - size}V16`;
        }

        const text = String(Math.abs(i * 500));
        if (vertical) {
            [...text].forEach((digit, n) => {
                const y = start + 12 * (n + 1);
                // skip digits that fall outside the strip
                if (y > 2 && y < length) {
                    labels += `<text x="1" y="${y}">${digit}</text>`;
                }
            });
        } else {
            labels += `<text x="${start + 1}" y="14">${text}</text>`;
        }
    }

    const mark = vertical ? `M1 ${pos + 0.5}H10` : `M${pos + 0.5} 1V10`;
    svg.innerHTML = `<path d="${minor}"/><path d="${major}"/>${labels}<path class="pointer" d="${mark}"/>`;
}

function drawRulers() {
    drawRuler(document.getElementById('rulerX'), artboard.offsetLeft, canvas.clientWidth, false, pointer.x);
    drawRuler(document.getElementById('rulerY'), artboard.offsetTop, canvas.clientHeight, true, pointer.y);
}

window.addEventListener('resize', drawRulers);
drawRulers();
```
